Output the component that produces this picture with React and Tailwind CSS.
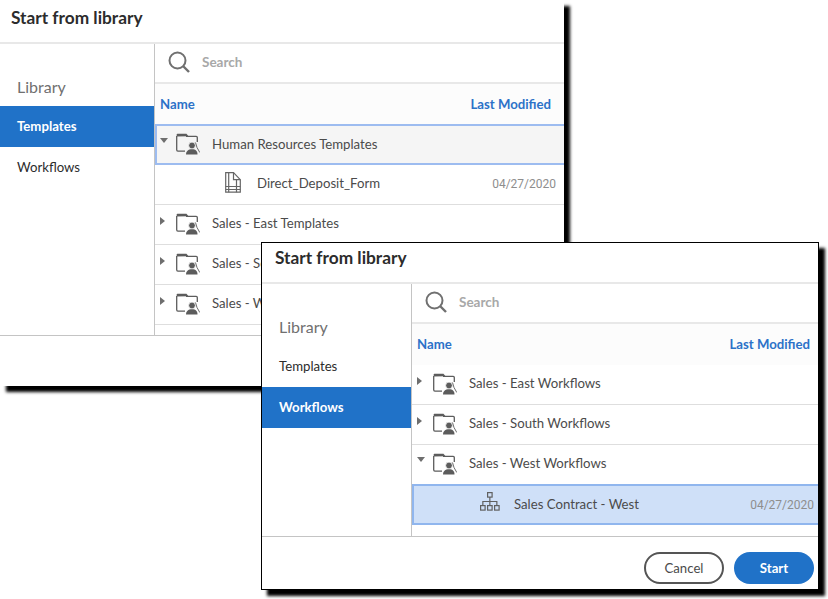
import React from "react";

const FolderIcon = () => (
  <svg width="24" height="22" viewBox="0 0 24 22" fill="none" className="shrink-0">
    <path d="M.7 3v13.800c0 .8.500 1.300 1.200 1.300H9" stroke="#5c5c5c" strokeWidth="1.300" />
    <path d="M.7 3.500V1.500C.7 1 1.200.7 1.700.7h8.800l2 2.600z" fill="#5c5c5c" />
    <path d="M10 3.300h10.200c.6 0 1.100.5 1.100 1.100V9" stroke="#5c5c5c" strokeWidth="1.300" />
    <circle cx="16" cy="12.500" r="3.400" fill="#5c5c5c" stroke="#fff" strokeWidth="0.800" />
    <path d="M10 21.500c0-3.200 2-5.200 6-5.200s5.500 2 5.500 5.200z" fill="#5c5c5c" />
    <path d="M19.500 9.500l1.500 5 2.800 5" stroke="#5c5c5c" strokeWidth="0.900" />
  </svg>
);

const FormIcon = () => (
  <svg width="16" height="21" viewBox="0 0 16 21" fill="none" className="shrink-0" stroke="#666" strokeWidth="1.200">
    <path d="M.7.7h7.800l6.800 7v12.500H.7z" />
    <path d="M8.500.7v7h6.800M3.700.7v19.500M11.500 7.700v12.500M.7 14.500h14.600M.7 17.500h14.600" />
  </svg>
);

const FlowIcon = () => (
  <svg width="20" height="19" viewBox="0 0 20 19" fill="none" className="shrink-0" stroke="#606060" strokeWidth="1.200">
    <rect x="7.600" y="0.600" width="4.500" height="4.500" />
    <rect x="0.600" y="13.600" width="4.500" height="4.500" />
    <rect x="7.600" y="13.600" width="4.500" height="4.500" />
    <rect x="14.600" y="13.600" width="4.500" height="4.500" />
    <path d="M9.850 5.100v8.500M2.850 13.600V9.500h14v4.100" />
  </svg>
);

const SearchIcon = () => (
  <svg width="22" height="22" viewBox="0 0 22 22" fill="none" stroke="#707070" className="shrink-0">
    <circle cx="9.500" cy="9.500" r="8" strokeWidth="2" />
    <path d="M15 15l6 6" strokeWidth="2.400" />
  </svg>
);

function Caret({ open }) {
  if (open) {
    return <span className="w-0 h-0 border-x-[4px] border-x-transparent border-t-[5px] border-t-[#6e6e6e] mb-2" />;
  }
  return <span className="w-0 h-0 border-y-[4px] border-y-transparent border-l-[5px] border-l-[#6e6e6e] mb-[6px]" />;
}

function FolderRow({ name, open, highlight }) {
  return (
    <div className={`shrink-0 flex items-center ${highlight ? "h-[41px] pb-[1px] pl-[3px] bg-[#f5f5f5] border-2 border-r-0 border-[#9dbcf0]" : "h-10 pb-[2px] pl-[5px] border-b border-[#dedede]"}`}>
      <span className="w-4 flex items-center"><Caret open={open} /></span>
      <FolderIcon />
      <span className="ml-[12px] pt-[1px] text-[#4b4b4b] whitespace-nowrap">{name}</span>
    </div>
  );
}

function ChildRow({ name, date, icon, selected, iconLeft, nameLeft, rightPad }) {
  return (
    <div className={`shrink-0 flex items-center ${rightPad} ${selected ? "h-[41px] -mt-[1px] bg-[#cfe0f8] border-2 border-r-0 border-[#90b6ee]" : "h-10 pb-[2px] border-b border-[#dedede]"}`}>
      <span className={`flex ${iconLeft}`}>{icon}</span>
      <span className={`${nameLeft} pt-[1px] text-[#4b4b4b] whitespace-nowrap`}>{name}</span>
      <span className="ml-auto pt-[1px] text-[#8e8e8e] font-['Roboto',sans-serif] text-[12px]">{date}</span>
    </div>
  );
}

function LibraryWindow({ active, className, sideWidth, titleClass, headerPad, footerClass, footer, children }) {
  return (
    <div className={`absolute bg-white flex flex-col font-['Lato','Noto_Sans',sans-serif] text-[13.200px] shadow-[6px_6px_3px_#000] ${className}`}>
      <div className={`shrink-0 border-b-2 border-[#e8e8e8] flex items-center font-bold text-[17.300px] text-[#2c2c2c] ${titleClass}`}>
        Start from library
      </div>
      <div className="flex flex-1 min-h-0">
        <div className={`${sideWidth} shrink-0 border-r border-[#c4c4c4] pt-[28px]`}>
          <div className="pl-[17px] h-[34px] text-[16px] text-[#707070] leading-[30px]">Library</div>
          {["Templates", "Workflows"].map((item) => (
            <div
              key={item}
              className={`h-[41px] pl-[17px] flex items-center ${item === active ? "bg-[#2072c8] text-white font-bold" : "text-[#2c2c2c]"}`}
            >
              {item}
            </div>
          ))}
        </div>
        <div className="flex-1 min-w-0 flex flex-col overflow-hidden">
          <div className="h-[40px] shrink-0 pb-[2px] border-b-2 border-[#e8e8e8] flex items-center pl-[13px] gap-[12px]">
            <SearchIcon />
            <span className="font-bold text-[#a8a8a8] text-[13.500px]">Search</span>
          </div>
          <div className={`h-[41px] shrink-0 pt-[1px] bg-[#fcfcfc] flex items-center justify-between pl-[5px] font-bold text-[#2c72c8] text-[13.200px] ${headerPad}`}>
            <span>Name</span>
            <span>Last Modified</span>
          </div>
          {children}
        </div>
      </div>
      <div className={`shrink-0 border-t border-[#c4c4c4] bg-white ${footerClass}`}>{footer}</div>
    </div>
  );
}

export default function App() {
  return (
    <div className="relative w-[828px] h-[599px] bg-white overflow-hidden">
      <LibraryWindow
        active="Templates"
        className="left-0 top-0 w-[564px] h-[386px]"
        sideWidth="w-[155px]"
        titleClass="h-[44px] pl-[11px] pb-[6px]"
        headerPad="pr-[13px]"
        footerClass="h-[51px]"
      >
        <div className="-mt-[1px]">
          <FolderRow name="Human Resources Templates" open highlight />
        </div>
        <ChildRow name="Direct_Deposit_Form" date="04/27/2020" icon={<FormIcon />} iconLeft="ml-[70px] mb-[3px]" nameLeft="ml-[16px]" rightPad="pr-[8px]" />
        <FolderRow name="Sales - East Templates" />
        <FolderRow name="Sales - South Templates" />
        <FolderRow name="Sales - West Templates" />
      </LibraryWindow>
      <LibraryWindow
        active="Workflows"
        className="left-[261px] top-[242px] w-[558px] h-[348px] border border-black"
        sideWidth="w-[150px]"
        titleClass="h-[41px] pl-[13px] pb-[10px]"
        headerPad="pr-[8px]"
        footerClass="h-[53px] flex items-start justify-end gap-[10px] pt-[15px] pr-[4px]"
        footer={
          <>
            <button className="w-[80px] h-8 pt-[2px] rounded-full border-2 border-[#555] text-[#4b4b4b]">Cancel</button>
            <button className="w-[80px] h-8 pt-[1px] rounded-full bg-[#2072c8] text-white font-bold">Start</button>
          </>
        }
      >
        <FolderRow name="Sales - East Workflows" />
        <FolderRow name="Sales - South Workflows" />
        <FolderRow name="Sales - West Workflows" open />
        <ChildRow name="Sales Contract - West" date="04/27/2020" icon={<FlowIcon />} iconLeft="ml-[66px] mb-[6px]" nameLeft="ml-[14px]" rightPad="pr-[4px]" selected />
      </LibraryWindow>
    </div>
  );
}
